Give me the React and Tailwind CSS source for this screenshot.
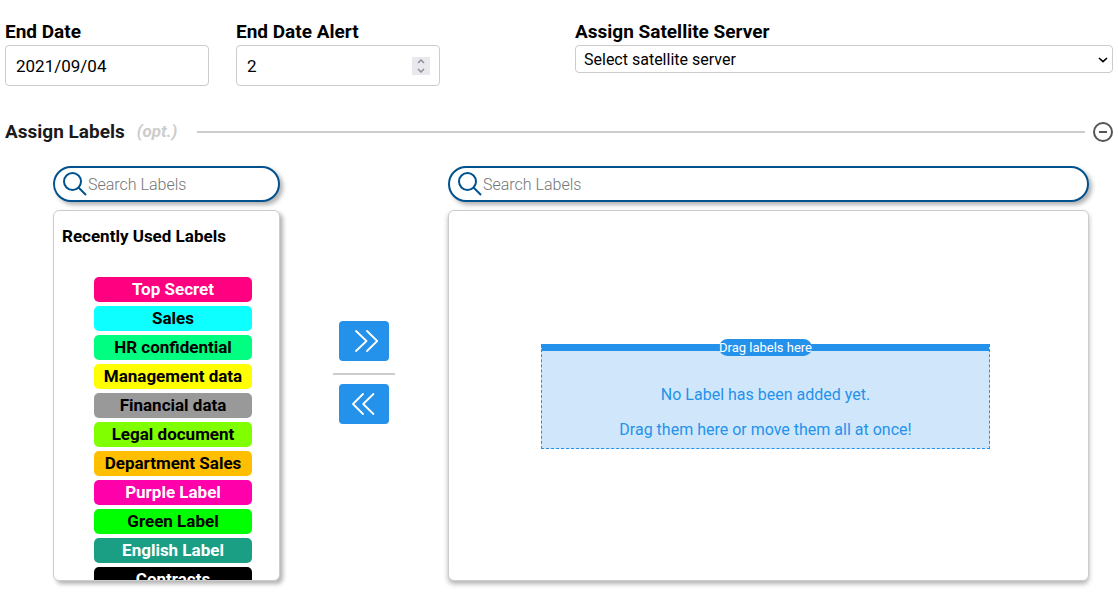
import React, { useState } from "react";

const labels = [
  { name: "Top Secret", style: "bg-[#ff0080] text-white" },
  { name: "Sales", style: "bg-[#0dffff] text-black" },
  { name: "HR confidential", style: "bg-[#00ff80] text-black" },
  { name: "Management data", style: "bg-[#ffff00] text-black" },
  { name: "Financial data", style: "bg-[#999999] text-black" },
  { name: "Legal document", style: "bg-[#80ff00] text-black" },
  { name: "Department Sales", style: "bg-[#ffbf00] text-black" },
  { name: "Purple Label", style: "bg-[#ff00aa] text-white" },
  { name: "Green Label", style: "bg-[#00ff00] text-black" },
  { name: "English Label", style: "bg-[#1a9f85] text-white" },
  { name: "Contracts", style: "bg-black text-white" },
];

function SearchBox({ id }) {
  return (
    <div className="flex h-9 items-center rounded-full border-2 border-[#00528f] bg-white pl-2 shadow-[3px_3px_4px_rgba(0,0,0,0.3)]">
      <label htmlFor={id} className="shrink-0">
        <svg width="24" height="24" viewBox="0 0 24 24" fill="none" stroke="#00528f" strokeWidth="2" className="block" aria-hidden="true">
          <circle cx="9.5" cy="9.5" r="8.5" />
          <path d="M15.5 15.5L23 23" />
        </svg>
      </label>
      <input
        id={id}
        type="text"
        aria-label="Search Labels"
        placeholder="Search Labels"
        className="min-w-0 flex-1 bg-transparent pt-0.5 pr-4 pl-px text-base font-light text-black outline-none placeholder:text-[#757575]"
      />
    </div>
  );
}

function MoveButton({ label, d }) {
  return (
    <button type="button" aria-label={label} className="flex h-10 w-[50px] items-center justify-center rounded bg-[#2492eb]">
      <svg width="28" height="24" viewBox="0 0 28 24" fill="none" stroke="white" strokeWidth="1.8" strokeLinecap="round" strokeLinejoin="round" aria-hidden="true">
        <path d={d} />
      </svg>
    </button>
  );
}

export default function App() {
  const [days, setDays] = useState(2);
  const heading = "block text-[19px] leading-[26px] font-bold text-black";
  const field = "block h-[41px] w-full rounded border border-[#cccccc] bg-white px-2.5 text-[17px] text-black outline-none";

  return (
    <main className="bg-white px-[5px] pt-[19px] pb-3 font-[Roboto,sans-serif]">
      <div className="grid grid-cols-[435fr_538fr] items-start gap-[135px]">
        <div className="grid grid-cols-2 gap-[27px]">
          <div>
            <label htmlFor="end" className={heading}>End Date</label>
            <input id="end" type="text" defaultValue="2021/09/04" className={field} />
          </div>
          <div>
            <label htmlFor="alert" className={heading}>End Date Alert</label>
            <div className="relative">
              <input
                id="alert"
                type="number"
                value={days}
                onChange={(e) => setDays(Number(e.target.value))}
                className={field + " [appearance:textfield]"}
              />
              <div className="absolute inset-y-0 right-2.5 flex items-center">
                <div className="flex h-[18px] w-[18px] flex-col bg-[#e9e9ed]">
                  <button type="button" aria-label="Increase" onClick={() => setDays(days + 1)} className="flex h-[9px] items-center justify-center">
                    <svg width="8" height="5" viewBox="0 0 8 5" fill="none" stroke="#8f8f9d" strokeWidth="1.5"><path d="M1 4L4 1L7 4" /></svg>
                  </button>
                  <button type="button" aria-label="Decrease" onClick={() => setDays(days - 1)} className="flex h-[9px] items-center justify-center">
                    <svg width="8" height="5" viewBox="0 0 8 5" fill="none" stroke="#8f8f9d" strokeWidth="1.5"><path d="M1 1L4 4L7 1" /></svg>
                  </button>
                </div>
              </div>
            </div>
          </div>
        </div>
        <div>
          <label htmlFor="server" className={heading}>Assign Satellite Server</label>
          <div className="relative">
            <select id="server" className="block h-7 w-full appearance-none rounded border border-[#cccccc] bg-white px-2 pt-0.5 text-base leading-6 text-black outline-none">
              <option>Select satellite server</option>
            </select>
            <svg width="10" height="6" viewBox="0 0 10 6" fill="none" stroke="black" strokeWidth="1.6" className="pointer-events-none absolute top-3 right-[5px]" aria-hidden="true">
              <path d="M1 1L5 4.7L9 1" />
            </svg>
          </div>
        </div>
      </div>

      <section className="mt-8">
        <div className="flex h-7 items-center">
          <h2 className="text-[19px] font-bold text-[#1a1a1a]">Assign Labels</h2>
          <span className="ml-3 text-[17px] font-bold text-[#cccccc] italic">(opt.)</span>
          <hr className="mr-2 ml-5 flex-1 border-t-2 border-[#cccccc]" />
          <button type="button" aria-label="Collapse labels" className="shrink-0">
            <svg width="20" height="20" viewBox="0 0 20 20" fill="none" stroke="#555555" strokeWidth="2" className="block">
              <circle cx="10" cy="10" r="9" />
              <path d="M6 10H14" />
            </svg>
          </button>
        </div>

        <div className="mt-5 mr-6 ml-12 grid grid-cols-[227fr_168fr_641fr]">
          <div className="flex min-w-0 flex-col gap-2">
            <SearchBox id="search-available" />
            <div className="h-[371px] overflow-hidden rounded-md border border-[#cccccc] bg-white px-2 pt-3.5 shadow-[3px_3px_4px_rgba(0,0,0,0.3)]">
              <h3 className="text-[17px] leading-[22px] font-bold whitespace-nowrap text-black">Recently Used Labels</h3>
              <ul className="mt-[30px] mr-[19px] ml-8 flex flex-col gap-1">
                {labels.map((l) => (
                  <li key={l.name} className={"h-[25px] rounded-[5px] text-center text-[17px] leading-[25px] font-bold whitespace-nowrap " + l.style}>
                    {l.name}
                  </li>
                ))}
              </ul>
            </div>
          </div>

          <div className="flex flex-col items-center justify-center pb-0.5">
            <MoveButton label="Add all labels" d="M6 2L16.5 12L6 22M17 2L27.2 12L17 22" />
            <hr className="mt-3 mb-[9px] w-[62px] border-t-2 border-[#cccccc]" />
            <MoveButton label="Remove all labels" d="M13 2L3 12L13 22M23.4 2L13.2 12L23.4 22" />
          </div>

          <div className="flex min-w-0 flex-col gap-2">
            <SearchBox id="search-assigned" />
            <div className="flex flex-1 items-center justify-center rounded-md border border-[#cccccc] bg-white pt-0.5 pr-1.5 shadow-[0_3px_5px_rgba(0,0,0,0.3)]">
              <div className="relative w-[71%] border border-t-[7px] border-dashed border-[#2492eb] bg-[#d0e7fb] pt-8 pb-1.5 text-center text-base text-[#2492eb] [border-top-style:solid]">
                <div className="absolute inset-x-0 -top-3 flex justify-center">
                  <span className="h-[17px] rounded-full bg-[#2492eb] text-[13px] leading-[17px] text-white">Drag labels here</span>
                </div>
                <p className="leading-6">No Label has been added yet.</p>
                <p className="mt-[11px] leading-6">Drag them here or move them all at once!</p>
              </div>
            </div>
          </div>
        </div>
      </section>
    </main>
  );
}
